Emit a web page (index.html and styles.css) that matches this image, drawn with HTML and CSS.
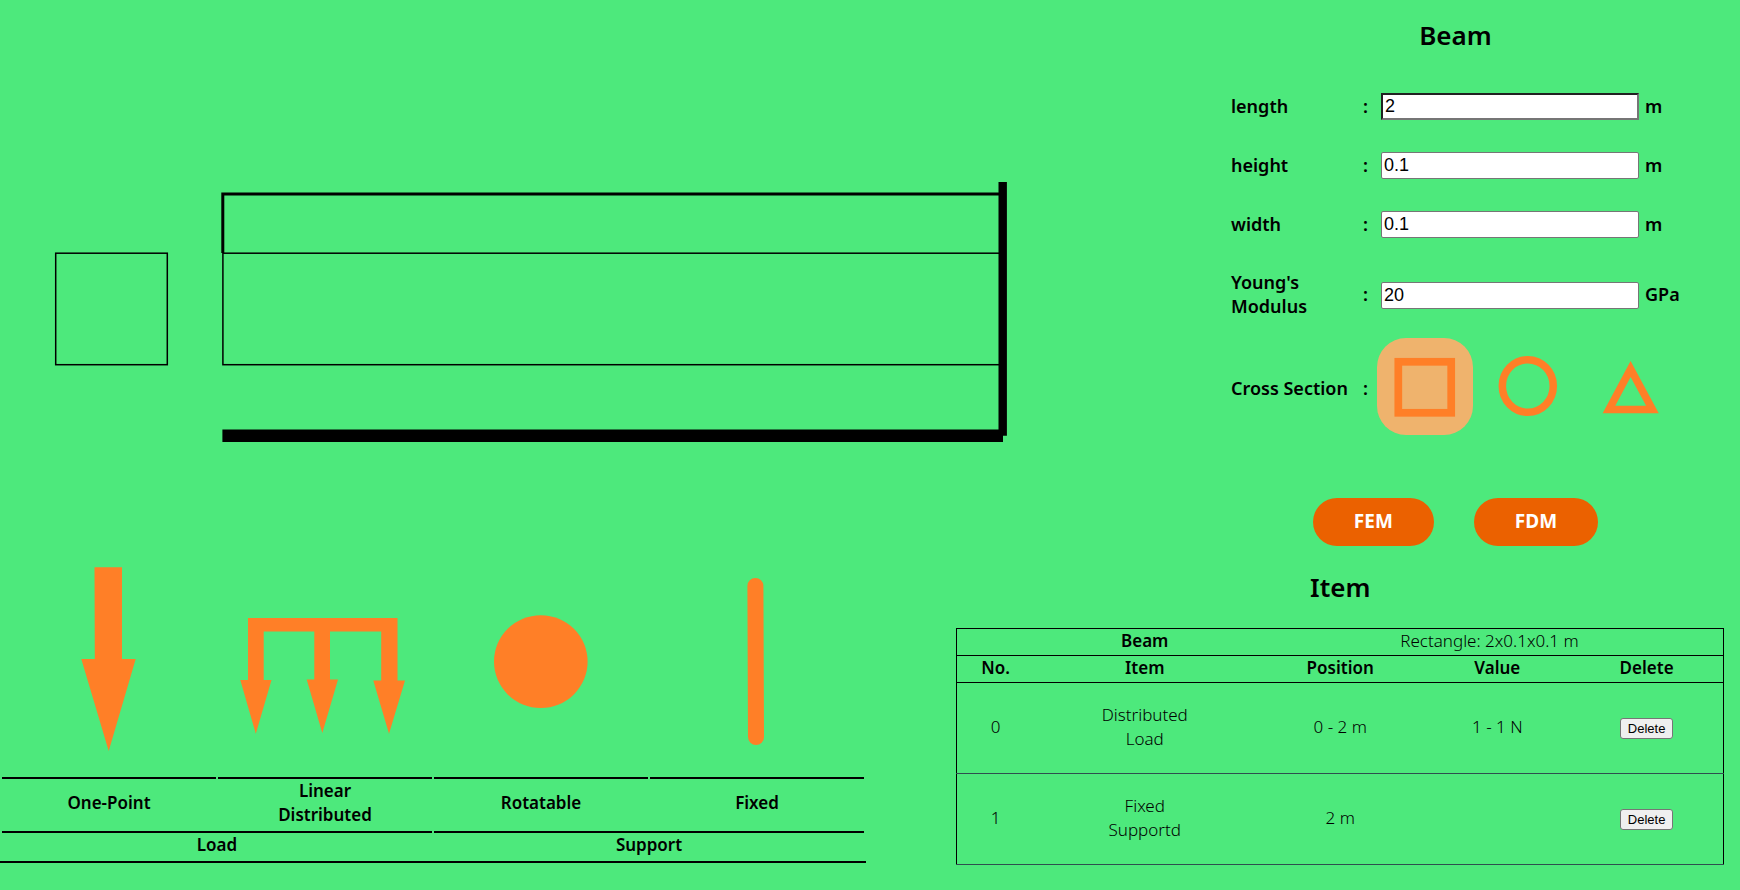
FILE: index.html
```html
<!DOCTYPE html>
<html lang="en">
<head>
<meta charset="utf-8">
<title>Beam</title>
<link rel="stylesheet" href="styles.css">
</head>
<body>
<main class="page">
  <section class="top">
    <svg class="canvas" viewBox="0 0 1115 557" role="img" aria-label="Beam drawing">
      <g fill="none" stroke="#000">
        <rect x="55.7" y="253.2" width="111.6" height="111.5" stroke-width="1.5"/>
        <rect x="222.9" y="253.2" width="780" height="111.5" stroke-width="1.5"/>
        <path d="M222.8 253V194.1H1003" stroke-width="3"/>
        <path d="M222.4 435.7H1003" stroke-width="12.4"/>
        <path d="M1002.7 182V435.7" stroke-width="8.4"/>
      </g>
    </svg>
    <form class="beam">
      <h2 class="title">Beam</h2>
      <div class="row">
        <label for="length">length</label><span>:</span>
        <input class="field first" id="length" type="text" value="2"><span>m</span>
      </div>
      <div class="row">
        <label for="height">height</label><span>:</span>
        <input class="field" id="height" type="text" value="0.1"><span>m</span>
      </div>
      <div class="row">
        <label for="width">width</label><span>:</span>
        <input class="field" id="width" type="text" value="0.1"><span>m</span>
      </div>
      <div class="row">
        <label for="young">Young's<br>Modulus</label><span>:</span>
        <input class="field" id="young" type="text" value="20"><span>GPa</span>
      </div>
      <div class="row sections" role="radiogroup" aria-labelledby="section-label">
        <span id="section-label">Cross Section</span><span>:</span>
        <div class="shapes">
          <label class="shape"><input type="radio" name="section" aria-label="Rectangle" checked>
            <svg viewBox="1378 338 96 97"><rect x="1399.3" y="361.8" width="52.9" height="51" stroke-width="7.7"/></svg></label>
          <label class="shape"><input type="radio" name="section" aria-label="Circle">
            <svg viewBox="1481 338 96 97"><ellipse cx="1528.8" cy="386" rx="25.5" ry="26.2" stroke-width="7.5"/></svg></label>
          <label class="shape"><input type="radio" name="section" aria-label="Triangle">
            <svg viewBox="1584 338 96 97"><path d="M1631.6 369L1610 409.5H1653.4Z" stroke-width="7.6"/></svg></label>
        </div>
      </div>
      <div class="actions">
        <button class="run" type="button">FEM</button>
        <button class="run" type="button">FDM</button>
      </div>
    </form>
  </section>

  <section class="bottom">
    <table class="tools">
      <tbody>
      <tr class="icons">
        <td><svg viewBox="3 560 212 214"><path d="M94.5 567.3H122V659H135.7L108.7 751L81.3 659H94.8Z"/></svg></td>
        <td><svg viewBox="219 560 212 214"><path d="M248 618H397.5V680.6H405L389 733.7L373.3 680.6H381.2V631.5H330V679.6H338L322.3 733L306.7 679.6H314.3V631.5H263.7V680H271.5L255.8 733.7L240.3 680H248Z"/></svg></td>
        <td><svg viewBox="435 560 212 214"><ellipse cx="540.8" cy="661.6" rx="46.8" ry="46.4"/></svg></td>
        <td><svg viewBox="651 560 212 214"><path d="M755.4 586L756 737" fill="none" stroke="#ff7f27" stroke-width="16" stroke-linecap="round"/></svg></td>
      </tr>
      <tr>
        <th>One-Point</th><th>Linear<br>Distributed</th><th>Rotatable</th><th>Fixed</th>
      </tr>
      <tr>
        <th colspan="2">Load</th><th colspan="2">Support</th>
      </tr>
      </tbody>
    </table>

    <div class="items">
      <h2 class="title">Item</h2>
      <table class="list">
        <colgroup><col class="c-no"><col class="c-item"><col class="c-pos"><col class="c-val"><col class="c-del"></colgroup>
        <thead>
          <tr><td></td><th>Beam</th><td colspan="3">Rectangle: 2x0.1x0.1 m</td></tr>
          <tr><th>No.</th><th>Item</th><th>Position</th><th>Value</th><th>Delete</th></tr>
        </thead>
        <tbody>
          <tr><td>0</td><td>Distributed<br>Load</td><td>0 - 2 m</td><td>1 - 1 N</td><td><button class="delete" type="button">Delete</button></td></tr>
          <tr><td>1</td><td>Fixed<br>Supportd</td><td>2 m</td><td></td><td><button class="delete" type="button">Delete</button></td></tr>
        </tbody>
      </table>
    </div>
  </section>
</main>
</body>
</html>
```
FILE: styles.css
```css
* { box-sizing: border-box; }
body {
  margin: 0;
  background: #4de97c;
  color: #000;
  font-family: "Noto Sans", "Open Sans", sans-serif;
  font-size: 17px;
  line-height: 24px;
}
.top {
  display: grid;
  grid-template-columns: 1115fr 625fr;
  align-items: start;
}
.canvas { display: block; width: 100%; }
.title {
  margin: 0;
  font-size: 26px;
  line-height: 36px;
  font-weight: 600;
  text-align: center;
}
.beam {
  padding: 17px 60px 0 116px;
  font-size: 18px;
  font-weight: 600;
}
.beam .title { margin-bottom: 24px; }
.row {
  display: grid;
  grid-template-columns: 126px 12px 1fr 35px;
  column-gap: 6px;
  align-items: center;
  padding: 16px 0;
}
.row > label, .row > span { padding-bottom: 2px; }
.field {
  height: 27px;
  padding: 1px 2px;
  border: 1px solid #767676;
  border-radius: 2px;
  background: #fff;
  font: 18px/21px "Liberation Sans", Arial, sans-serif;
  min-width: 0;
}
.field.first { border: 2px inset #767676; border-radius: 0; }
.sections { padding: 2px 0 4px; }
.sections > span { padding: 2px 0 0; }
.sections .shapes {
  grid-column: 3 / 5;
  display: flex;
  gap: 7px;
  margin-left: -4px;
}
.shape {
  position: relative;
  flex: 0 0 96px;
  height: 97px;
  border-radius: 29px;
}
.shape input {
  position: absolute;
  inset: 0;
  margin: 0;
  width: 100%;
  height: 100%;
  opacity: 0;
}
.shape:has(input:checked) { background: #efb36d; }
.shape svg { display: block; fill: none; stroke: #ff7f27; }
.actions {
  display: flex;
  justify-content: center;
  gap: 40px;
  margin-top: 59px;
}
.run {
  height: 48px;
  padding: 0 41px 2px;
  border: 0;
  border-radius: 24px;
  background: #eb6100;
  color: #fff;
  font: 700 19px/24px "Noto Sans", "Open Sans", sans-serif;
}
.bottom {
  display: flex;
  justify-content: space-between;
  align-items: flex-start;
  padding-right: 16px;
}
.tools {
  width: calc(50% + 4px);
  table-layout: fixed;
  border-spacing: 2px;
  border-bottom: 2px solid #000;
}
.tools td { padding: 1px; }
.tools th { padding: 0 1px 2px; border-top: 2px solid #000; font-weight: 600; }
.tools svg { display: block; width: 100%; fill: #ff7f27; }
.items { width: calc(44% + 9px); padding-top: 12px; }
.items .title { margin-bottom: 23px; }
.list {
  width: 100%;
  table-layout: fixed;
  border: 1px solid #000;
  border-collapse: collapse;
  text-align: center;
}
.c-no { width: 10%; }
.c-item { width: 29%; }
.c-pos { width: 22%; }
.c-val { width: 19%; }
.c-del { width: 20%; }
.list td, .list th { padding: 0 1px 2px; }
.list td { font-weight: 300; }
.list thead tr { border-bottom: 1px solid #000; }
.list th { font-weight: 600; }
.list tbody tr { border-bottom: 1px solid #2f4f4f; }
.list tbody td { padding: 20px 1px 22px; }
.delete {
  padding: 2px 7px;
  border: 1px solid #767676;
  border-radius: 3px;
  background: #efefef;
  color: #000;
  font: 13px/15px "Liberation Sans", Arial, sans-serif;
}
```
